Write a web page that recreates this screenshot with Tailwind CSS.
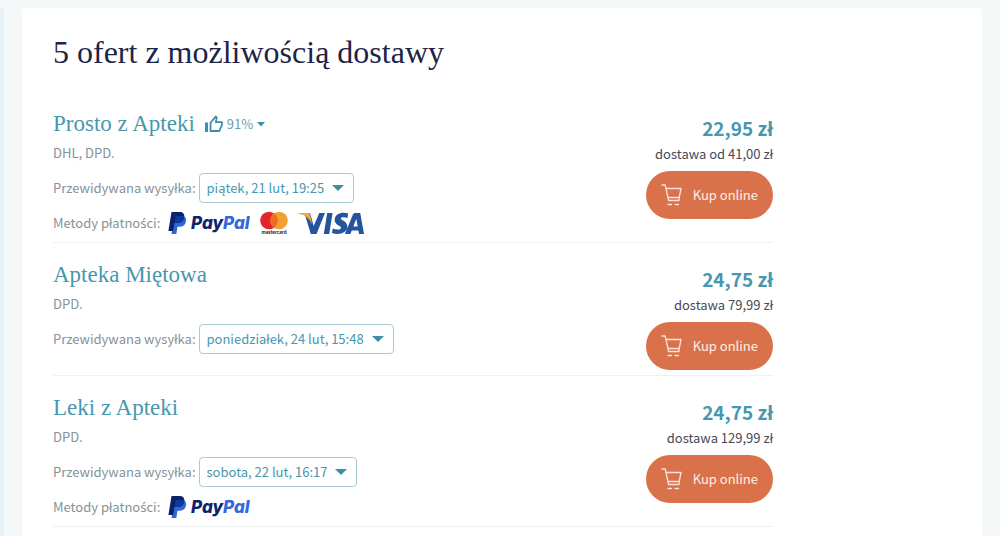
<!DOCTYPE html>
<html lang="pl">
<head>
<meta charset="utf-8">
<meta name="viewport" content="width=device-width, initial-scale=1">
<title>Oferty z możliwością dostawy</title>
<script src="https://cdn.jsdelivr.net/npm/@tailwindcss/browser@4"></script>
</head>
<body class="min-h-screen overflow-hidden bg-[#f4f8f9] pt-2 font-['Noto_Sans_CJK_SC','Noto_Sans',sans-serif] text-[13px] text-[#84929a]">

<svg class="hidden" aria-hidden="true">
  <symbol id="cart" viewBox="0 0 22 24">
    <g fill="none" stroke="#fbe3d9" stroke-width="1.3" stroke-linecap="round" stroke-linejoin="round">
      <path d="M1 2h3.200l3.400 15.500H18M5 5.500h15l-1.800 9H7M18.200 14.500l-.2 3"/>
      <path d="M7 21.500h3.500M14 21.500h3.500"/>
    </g>
  </symbol>
  <symbol id="paypal" viewBox="0 0 82 24">
    <path fill="#2f66d4" d="M6.500 5h8.200c2.700.5 3.800 2.500 3.300 5.200-.6 3.700-3 5.600-6.600 5.600H9.500L8.300 23H3.500z"/>
    <path fill="#0b2169" d="M3.500 1h8.300c3.200 0 5 2 4.400 5.400-.6 3.800-3 5.700-6.700 5.700H6.400L5.100 20H.4z"/>
    <path fill="#0a3a9c" d="M7.700 5h8.500q.2.700 0 1.600c-.6 3.700-3 5.500-6.700 5.500h-3z"/>
    <text x="23" y="18" font-family="Inter, sans-serif" font-size="17" font-weight="800" font-style="italic" fill="#0c2370">Pay<tspan fill="#3269dc">Pal</tspan></text>
  </symbol>
  <symbol id="mastercard" viewBox="0 0 28 24">
    <circle cx="9" cy="9.500" r="8.800" fill="#e3262b"/>
    <circle cx="19" cy="9.500" r="8.800" fill="#f2a034"/>
    <path fill="#ef6a25" d="M14 2.300a8.800 8.800 0 0 1 0 14.400 8.800 8.800 0 0 1 0-14.400z"/>
    <text x="14" y="23" text-anchor="middle" font-family="Lato, sans-serif" font-size="5" font-weight="900" fill="#33272a">mastercard</text>
  </symbol>
  <symbol id="visa" viewBox="0 0 66 24">
    <path fill="#24549f" d="M12 2l3.700 13L21.300 2h5.700l-8.500 21h-5.700L7.200 4.500zM29.200 2h5.400l-3.400 21h-5.400zM50.200 2.600l-.8 4.400c-2.600-1.100-6.600-1.300-6.600.5 0 2 6.500 2.300 6.500 8.100 0 6.700-8.500 8.800-15.300 6.400l.8-4.600c3.300 1.600 8.200 1.600 8.200-.7 0-2.500-6.300-2.500-6.300-7.800 0-6.200 7.700-8.300 13.500-6.300zM57.500 2h4.700L66 23h-5l-.6-3.500h-6.700L52.500 23h-5.600l7.900-19.300c.5-1.200 1.400-1.700 2.700-1.700zm.8 5.700L55.300 15.500h4.400z"/>
    <path fill="#f0a640" d="M0 2h9.500c1.500 0 2.200.6 2.600 2l2 9.500C12 8 7.500 4 0 2.500z"/>
  </symbol>
</svg>

<div class="flex min-h-screen">
  <div class="w-1 shrink-0 bg-[#e6f2f8]"></div>
  <main class="mr-[18px] ml-[18px] grow rounded-sm bg-white px-[31px] pt-6">
    <h1 class="mb-5 font-['Source_Serif_Pro','Liberation_Serif',serif] text-[32px] leading-10 text-[#1d2547]">5 ofert z możliwością dostawy</h1>

    <ul class="max-w-[720px]">
      <li class="flex justify-between border-b border-[#eef2f3] pb-[5px]">
        <div class="pt-4">
          <div class="flex h-8 items-center gap-2.5">
            <h2 class="font-['Source_Serif_Pro','Liberation_Serif',serif] text-[23px] leading-8"><a href="#prosto" class="text-[#4797ae]">Prosto z Apteki</a></h2>
            <button type="button" class="flex items-center gap-1 text-[#6a9fb2]">
              <svg class="h-[18px] w-[18px]" viewBox="0 0 18 18" fill="none" aria-hidden="true">
                <path d="M0 7.500h3V17H0z" fill="#3c8fa9"/>
                <path d="M5.500 16V7.800L10.700 1.500l1 .9-.8 4.700H17v2.600L14.300 16z" stroke="#3c8fa9" stroke-width="1.800" stroke-linejoin="round"/>
              </svg>
              <span class="leading-5">91%</span>
              <svg class="h-[5px] w-2" viewBox="0 0 8 5" aria-hidden="true"><path d="M0 0h8L4 4.500z" fill="#3c8fa9"/></svg>
            </button>
          </div>
          <p class="mt-px leading-6">DHL, DPD.</p>
          <div class="mt-2 flex items-center gap-[3px]">
            <label for="ship1">Przewidywana wysyłka:</label>
            <div class="grid items-center">
              <select id="ship1" class="col-start-1 row-start-1 h-[30px] appearance-none rounded border border-[#a9ccd3] bg-white pr-7 pl-[7px] text-[#4797ae]"><option>piątek, 21 lut, 19:25</option></select>
              <svg class="pointer-events-none col-start-1 row-start-1 mr-2.5 h-1.5 w-3 justify-self-end" viewBox="0 0 12 6" aria-hidden="true"><path d="M0 0h12L6 6z" fill="#3c8fa9"/></svg>
            </div>
          </div>
          <div class="mt-1.5 flex h-7 items-center">
            <span class="mr-2 leading-6">Metody płatno<span class="font-['Noto_Sans']">ś</span>ci:</span>
            <svg class="mr-2.5 h-6 w-[82px]" role="img" aria-label="PayPal"><use href="#paypal"/></svg>
            <svg class="mr-2.5 h-6 w-7" role="img" aria-label="Mastercard"><use href="#mastercard"/></svg>
            <svg class="h-6 w-[66px]" role="img" aria-label="Visa"><use href="#visa"/></svg>
          </div>
        </div>
        <div class="flex flex-col items-end pt-[22px]">
          <strong class="text-[19px] leading-7 font-bold text-[#4797ae]">22,95 zł</strong>
          <span class="leading-6 text-[#454a59]">dostawa od 41,00 zł</span>
          <button type="button" class="mt-[5px] flex h-12 items-center gap-2.5 rounded-full bg-[#d9724a] px-[15px] text-[#fdeee7]">
            <svg class="h-6 w-[22px]" aria-hidden="true"><use href="#cart"/></svg>
            <span>Kup online</span>
          </button>
        </div>
      </li>

      <li class="flex justify-between border-b border-[#eef2f3] pb-[5px]">
        <div class="pt-4">
          <h2 class="font-['Source_Serif_Pro','Liberation_Serif',serif] text-[23px] leading-8"><a href="#mietowa" class="text-[#4797ae]">Apteka Miętowa</a></h2>
          <p class="mt-px leading-6">DPD.</p>
          <div class="mt-2 flex items-center gap-[3px]">
            <label for="ship2">Przewidywana wysyłka:</label>
            <div class="grid items-center">
              <select id="ship2" class="col-start-1 row-start-1 h-[30px] appearance-none rounded border border-[#a9ccd3] bg-white pr-7 pl-[7px] text-[#4797ae]"><option>poniedziałek, 24 lut, 15:48</option></select>
              <svg class="pointer-events-none col-start-1 row-start-1 mr-2.5 h-1.5 w-3 justify-self-end" viewBox="0 0 12 6" aria-hidden="true"><path d="M0 0h12L6 6z" fill="#3c8fa9"/></svg>
            </div>
          </div>
        </div>
        <div class="flex flex-col items-end pt-[22px]">
          <strong class="text-[19px] leading-7 font-bold text-[#4797ae]">24,75 zł</strong>
          <span class="leading-6 text-[#454a59]">dostawa 79,99 zł</span>
          <button type="button" class="mt-[5px] flex h-12 items-center gap-2.5 rounded-full bg-[#d9724a] px-[15px] text-[#fdeee7]">
            <svg class="h-6 w-[22px]" aria-hidden="true"><use href="#cart"/></svg>
            <span>Kup online</span>
          </button>
        </div>
      </li>

      <li class="flex justify-between border-b border-[#eef2f3] pb-[5px]">
        <div class="pt-4">
          <h2 class="font-['Source_Serif_Pro','Liberation_Serif',serif] text-[23px] leading-8"><a href="#leki" class="text-[#4797ae]">Leki z Apteki</a></h2>
          <p class="mt-px leading-6">DPD.</p>
          <div class="mt-2 flex items-center gap-[3px]">
            <label for="ship3">Przewidywana wysyłka:</label>
            <div class="grid items-center">
              <select id="ship3" class="col-start-1 row-start-1 h-[30px] appearance-none rounded border border-[#a9ccd3] bg-white pr-7 pl-[7px] text-[#4797ae]"><option>sobota, 22 lut, 16:17</option></select>
              <svg class="pointer-events-none col-start-1 row-start-1 mr-2.5 h-1.5 w-3 justify-self-end" viewBox="0 0 12 6" aria-hidden="true"><path d="M0 0h12L6 6z" fill="#3c8fa9"/></svg>
            </div>
          </div>
          <div class="mt-1.5 flex h-7 items-center">
            <span class="mr-2 leading-6">Metody płatno<span class="font-['Noto_Sans']">ś</span>ci:</span>
            <svg class="h-6 w-[82px]" role="img" aria-label="PayPal"><use href="#paypal"/></svg>
          </div>
        </div>
        <div class="flex flex-col items-end pt-[22px]">
          <strong class="text-[19px] leading-7 font-bold text-[#4797ae]">24,75 zł</strong>
          <span class="leading-6 text-[#454a59]">dostawa 129,99 zł</span>
          <button type="button" class="mt-[5px] flex h-12 items-center gap-2.5 rounded-full bg-[#d9724a] px-[15px] text-[#fdeee7]">
            <svg class="h-6 w-[22px]" aria-hidden="true"><use href="#cart"/></svg>
            <span>Kup online</span>
          </button>
        </div>
      </li>
    </ul>
  </main>
</div>
</body>
</html>
